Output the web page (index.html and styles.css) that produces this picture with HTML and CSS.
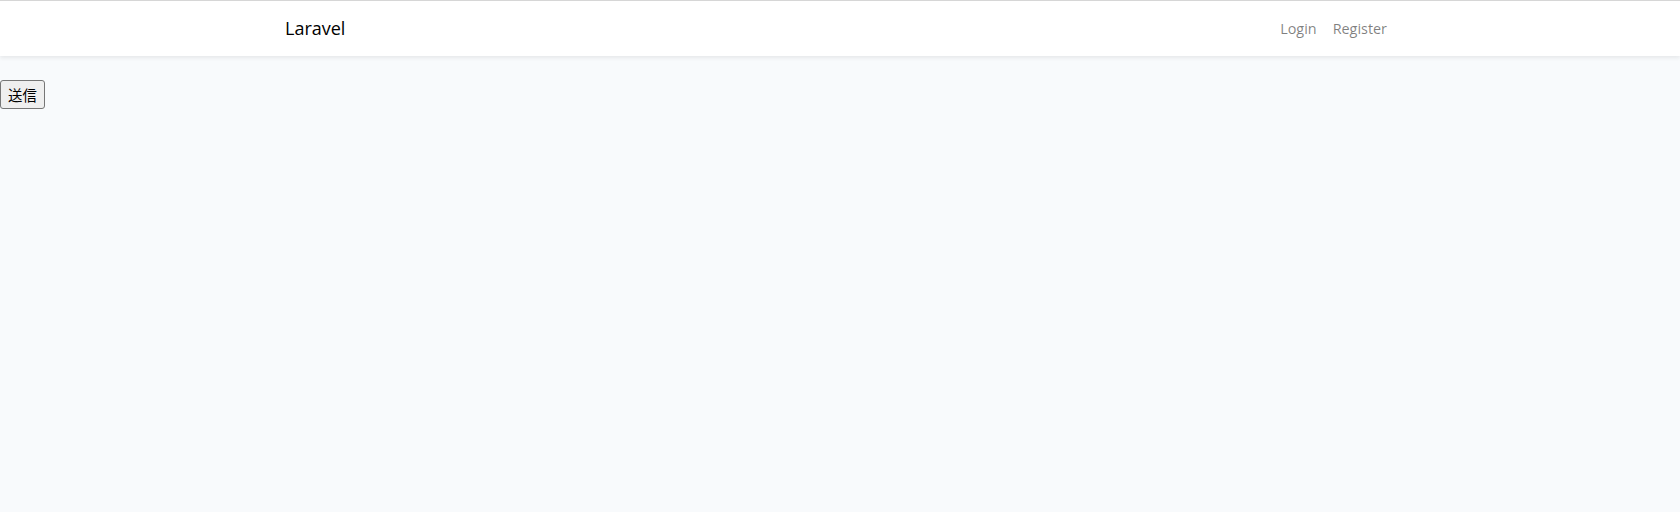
FILE: index.html
```html
<!DOCTYPE html>
<html lang="ja">
<head>
<meta charset="utf-8">
<title>Laravel</title>
<link rel="stylesheet" href="styles.css">
</head>
<body>
<div class="app">
  <nav class="navbar">
    <div class="container">
      <a class="brand" href="#">Laravel</a>
      <ul class="nav">
        <li><a class="nav-link" href="#">Login</a></li>
        <li><a class="nav-link" href="#">Register</a></li>
      </ul>
    </div>
  </nav>
  <main class="main">
    <form class="form">
      <button type="button" class="send">送信</button>
    </form>
  </main>
</div>
</body>
</html>
```

FILE: styles.css
```css
html, body {
  margin: 0;
  padding: 0;
}
body {
  font-family: "Open Sans", "Noto Sans CJK JP", sans-serif;
  font-size: 14.4px;
  line-height: 1.6;
  color: #212529;
  background: #f8fafc;
  min-height: 512px;
}
.navbar {
  background: #fff;
  border-top: 1px solid #d6d6d6;
  box-shadow: 0 2px 4px rgba(0, 0, 0, 0.075);
  padding: 8px 0;
}
.container {
  max-width: 1110px;
  margin: 0 auto;
  padding: 0 15px;
  display: flex;
  align-items: center;
  justify-content: space-between;
}
.brand {
  font-size: 18px;
  line-height: 1.6;
  padding: 5px 0;
  color: #000;
  text-decoration: none;
}
.nav {
  list-style: none;
  margin: 0;
  padding: 0;
  display: flex;
}
.nav-link {
  display: block;
  padding: 8px;
  color: rgba(0, 0, 0, 0.5);
  text-decoration: none;
}
.main {
  padding: 24px 0;
}
.form {
  margin: 0;
}
.send {
  font-family: "Noto Sans CJK JP", sans-serif;
  font-size: 14.4px;
  font-weight: 400;
  line-height: 23px;
  padding: 2px 7px;
  margin: 0;
  color: #000;
  background: #efefef;
  border: 1px solid #767676;
  border-radius: 3px;
}
```
